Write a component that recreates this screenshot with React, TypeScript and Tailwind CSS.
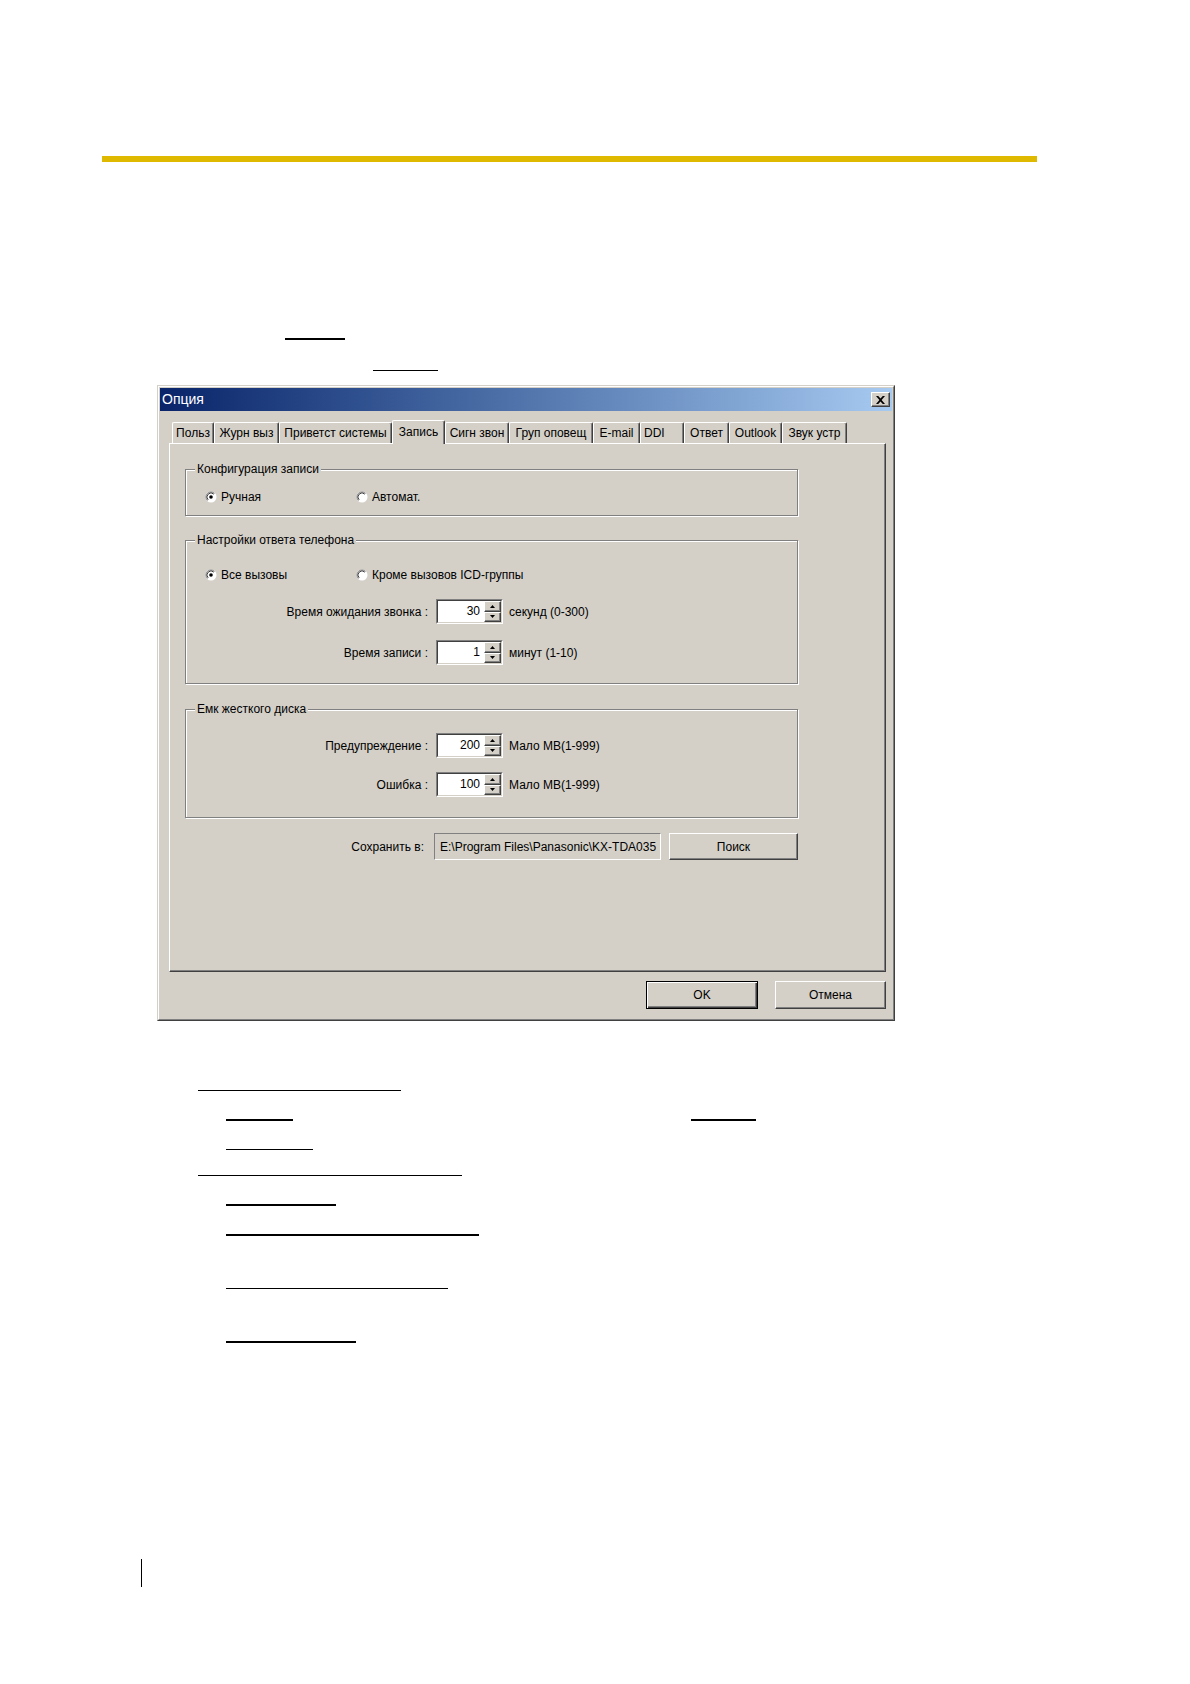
import type { ReactNode } from "react";

const tabs = [
  { label: "Польз", w: "w-[42px]" },
  { label: "Журн выз", w: "w-[65px]" },
  { label: "Приветст системы", w: "w-[113px]" },
  { label: "Запись", w: "w-[53px]", active: true },
  { label: "Сигн звон", w: "w-[64px]" },
  { label: "Груп оповещ", w: "w-[84px]" },
  { label: "E-mail", w: "w-[47px]" },
  { label: "DDI", w: "w-[44px]", left: true },
  { label: "Ответ", w: "w-[45px]" },
  { label: "Outlook", w: "w-[53px]" },
  { label: "Звук устр", w: "w-[65px]" },
];

const raised =
  "border border-t-white border-l-white border-r-[#404040] border-b-[#404040] shadow-[inset_-1px_-1px_0_#808080]";

function Radio({ label, checked }: { label: string; checked?: boolean }) {
  return (
    <div className="flex items-center">
      <svg width="12" height="12" viewBox="0 0 12 12" className="shrink-0">
        <circle cx="6" cy="6" r="5.5" fill="#fff" />
        <path d="M2.46 9.54 A5 5 0 0 1 9.54 2.46" stroke="#808080" fill="none" />
        <path d="M3.17 8.83 A4 4 0 0 1 8.83 3.17" stroke="#404040" fill="none" />
        {checked && <circle cx="6" cy="6" r="1.8" fill="#000" />}
      </svg>
      <span className="ml-[4px]">{label}</span>
    </div>
  );
}

function Group({ label, className, children }: { label: string; className: string; children: ReactNode }) {
  return (
    <div className={`relative w-[613px] border border-[#808080] shadow-[inset_1px_1px_0_#fff,1px_1px_0_#fff] ${className}`}>
      <span className="absolute -top-[8px] left-[9px] bg-[#d4d0c8] px-[2px] leading-[14px]">{label}</span>
      {children}
    </div>
  );
}

function Arrow({ up }: { up?: boolean }) {
  return (
    <svg width="5" height="3" viewBox="0 0 5 3">
      <path d={up ? "M2.5 0 L5 3 L0 3Z" : "M0 0 L5 0 L2.5 3Z"} fill="#000" />
    </svg>
  );
}

function SpinRow({ label, value, suffix, className = "" }: { label: string; value: string; suffix: string; className?: string }) {
  return (
    <div className={`flex h-[25px] items-center ${className}`}>
      <span className="w-[242px] text-right">{label}</span>
      <div className="ml-[8px] h-[25px] w-[67px] border border-t-[#808080] border-l-[#808080] border-r-white border-b-white">
        <div className="flex h-full border border-t-[#404040] border-l-[#404040] border-r-[#d4d0c8] border-b-[#d4d0c8] bg-white">
          <span className="flex-1 pr-[4px] text-right leading-[21px]">{value}</span>
          <div className="flex w-[17px] flex-col">
            <div className={`flex flex-1 items-center justify-center bg-[#d4d0c8] ${raised}`}>
              <Arrow up />
            </div>
            <div className={`flex flex-1 items-center justify-center bg-[#d4d0c8] ${raised}`}>
              <Arrow />
            </div>
          </div>
        </div>
      </div>
      <span className="ml-[6px]">{suffix}</span>
    </div>
  );
}

function Dialog() {
  return (
    <div className="ml-[157px] mt-[14px] w-[738px] border border-[#d4d0c8] border-r-[#404040] border-b-[#404040] bg-[#d4d0c8] text-[12px]">
      <div className="border border-white border-r-[#808080] border-b-[#808080] px-[1px] pt-[1px] pb-[10px]">
        {/* title bar */}
        <div className="flex h-[23px] items-center bg-linear-to-r from-[#0a246a] to-[#a6caf0] pl-[2px] pr-[2px]">
          <span className="flex-1 text-[14px] text-white">Опция</span>
          <div className={`flex h-[15px] w-[19px] items-center justify-center bg-[#d4d0c8] ${raised}`}>
            <svg width="9" height="8" viewBox="0 0 9 8">
              <path d="M0 0 L2.2 0 L4.5 2.6 L6.8 0 L9 0 L5.6 4 L9 8 L6.8 8 L4.5 5.4 L2.2 8 L0 8 L3.4 4Z" fill="#000" />
            </svg>
          </div>
        </div>

        {/* tabs */}
        <div className="ml-[12px] mt-[9px] flex h-[23px] items-end">
          {tabs.map((t) =>
            t.active ? (
              <div
                key={t.label}
                className={`relative z-10 -mb-[1px] flex h-[24px] items-center justify-center rounded-t-[2px] bg-[#d4d0c8] pb-[2px] border-t border-l border-r border-t-white border-l-white border-r-[#404040] shadow-[inset_-1px_0_0_#808080] ${t.w}`}
              >
                {t.label}
              </div>
            ) : (
              <div
                key={t.label}
                className={`flex h-[21px] items-center rounded-t-[2px] border-t border-l border-r border-t-white border-l-white border-r-[#404040] shadow-[inset_-1px_0_0_#808080] ${t.left ? "justify-start pl-[3px]" : "justify-center"} ${t.w}`}
              >
                {t.label}
              </div>
            )
          )}
        </div>

        {/* panel */}
        <div className={`ml-[9px] mr-[6px] h-[529px] pl-[15px] pt-[25px] ${raised}`}>
          <Group label="Конфигурация записи" className="h-[47px] pl-[19px] pt-[20px]">
            <div className="flex h-[14px] items-center">
              <div className="w-[151px]">
                <Radio label="Ручная" checked />
              </div>
              <Radio label="Автомат." />
            </div>
          </Group>

          <Group label="Настройки ответа телефона" className="mt-[24px] h-[144px] pt-[27px]">
            <div className="flex h-[14px] items-center pl-[19px]">
              <div className="w-[151px]">
                <Radio label="Все вызовы" checked />
              </div>
              <Radio label="Кроме вызовов ICD-группы" />
            </div>
            <SpinRow className="mt-[17px]" label="Время ожидания звонка :" value="30" suffix="секунд (0-300)" />
            <SpinRow className="mt-[16px]" label="Время записи :" value="1" suffix="минут (1-10)" />
          </Group>

          <Group label="Емк жесткого диска" className="mt-[25px] h-[109px] pt-[23px]">
            <SpinRow label="Предупреждение :" value="200" suffix="Мало MB(1-999)" />
            <SpinRow className="mt-[14px]" label="Ошибка :" value="100" suffix="Мало MB(1-999)" />
          </Group>

          <div className="mt-[15px] flex h-[27px] items-center">
            <span className="w-[239px] text-right">Сохранить в:</span>
            <div className="ml-[10px] flex h-[27px] w-[227px] items-center overflow-hidden whitespace-nowrap border border-t-[#808080] border-l-[#808080] border-r-white border-b-white pl-[5px]">
              E:\Program Files\Panasonic\KX-TDA035
            </div>
            <button className={`ml-[8px] h-[27px] w-[129px] bg-[#d4d0c8] ${raised}`}>Поиск</button>
          </div>
        </div>

        {/* buttons */}
        <div className="mr-[6px] mt-[9px] flex justify-end gap-[17px]">
          <button className="h-[28px] w-[112px] border border-black bg-[#d4d0c8] shadow-[inset_1px_1px_0_#fff,inset_-1px_-1px_0_#404040,inset_-2px_-2px_0_#808080]">
            OK
          </button>
          <button className={`h-[28px] w-[111px] bg-[#d4d0c8] ${raised}`}>Отмена</button>
        </div>
      </div>
    </div>
  );
}

export default function App() {
  return (
    <div className="min-h-[1684px] w-full bg-white pt-[156px] font-['Liberation_Sans',Arial,sans-serif] text-black">
      <div className="ml-[102px] h-[6px] w-[935px] bg-[#dfb800]" />
      <div className="ml-[285px] mt-[176px] h-[2px] w-[60px] bg-black" />
      <div className="ml-[373px] mt-[30px] h-px w-[65px] bg-black" />

      <Dialog />

      <div className="ml-[198px] mt-[69px] h-px w-[203px] bg-black" />
      <div className="mt-[28px] flex">
        <div className="ml-[226px] h-[2px] w-[67px] bg-black" />
        <div className="ml-[398px] h-[2px] w-[65px] bg-black" />
      </div>
      <div className="ml-[226px] mt-[28px] h-px w-[87px] bg-black" />
      <div className="ml-[198px] mt-[25px] h-px w-[264px] bg-black" />
      <div className="ml-[226px] mt-[28px] h-[2px] w-[110px] bg-black" />
      <div className="ml-[226px] mt-[28px] h-[2px] w-[253px] bg-black" />
      <div className="ml-[226px] mt-[52px] h-px w-[222px] bg-black" />
      <div className="ml-[226px] mt-[52px] h-[2px] w-[130px] bg-black" />
      <div className="ml-[141px] mt-[216px] h-[28px] w-px bg-black" />
    </div>
  );
}
